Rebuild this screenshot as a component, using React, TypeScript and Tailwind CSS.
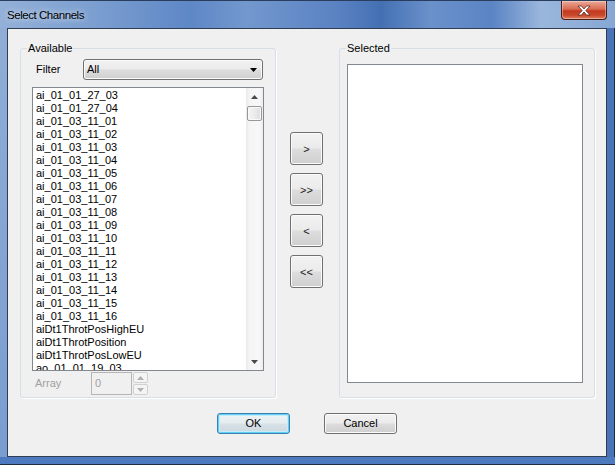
import React from 'react';

const channels = [
  'ai_01_01_27_03',
  'ai_01_01_27_04',
  ...Array.from({ length: 16 }, (_, i) => `ai_01_03_11_${String(i + 1).padStart(2, '0')}`),
  'aiDt1ThrotPosHighEU',
  'aiDt1ThrotPosition',
  'aiDt1ThrotPosLowEU',
  'ao_01_01_19_03',
];

const btnFace =
  'border border-[#707070] rounded-[3px] bg-[linear-gradient(180deg,#f2f2f2_0%,#ebebeb_48%,#dddddd_52%,#cfcfcf_100%)] shadow-[inset_0_0_0_1px_#fbfbfb]';

function GroupBox({ label, children }: { label: string; children: React.ReactNode }) {
  return (
    <div className="relative mt-[19px] h-[350px] w-[256px] rounded-[3px] border border-[#d5dfe5] shadow-[1px_1px_0_#ffffff]">
      <span className="absolute -top-[7px] left-[6px] bg-[#f0f0f0] px-[1px] text-[11px] leading-[13px] text-black">
        {label}
      </span>
      {children}
    </div>
  );
}

function Arrow({ dir, color }: { dir: 'up' | 'down'; color: string }) {
  return (
    <svg width="7" height="4" viewBox="0 0 7 4">
      <path d={dir === 'up' ? 'M0 4H7L3.5 0Z' : 'M0 0H7L3.5 4Z'} fill={color} />
    </svg>
  );
}

function ScrollBar() {
  return (
    <div className="flex h-full w-[17px] flex-col bg-[linear-gradient(90deg,#e9e9e9_0%,#f5f5f5_20%,#f7f7f7_80%,#ececec_100%)]">
      <div className="flex h-[17px] items-center justify-center">
        <Arrow dir="up" color="#4a4a4a" />
      </div>
      <div className="mx-[1px] mt-[1px] h-[15px] rounded-[2px] border border-[#979797] bg-[linear-gradient(90deg,#f4f4f4_0%,#ececec_50%,#dcdcdc_100%)] shadow-[inset_0_0_0_1px_#fafafa]" />
      <div className="flex-1" />
      <div className="flex h-[17px] items-center justify-center">
        <Arrow dir="down" color="#4a4a4a" />
      </div>
    </div>
  );
}

function MoveButton({ text }: { text: string }) {
  return (
    <button className={`flex h-[33px] w-[33px] items-center justify-center pt-[1px] text-[11px] leading-none text-[#222] ${btnFace}`}>
      {text}
    </button>
  );
}

export default function App() {
  return (
    <div className="flex h-[465px] w-[615px] flex-col overflow-hidden bg-[#4d7abf] font-['Liberation_Sans',Arial,sans-serif]">
      {/* title bar */}
      <div className="flex h-[28px] shrink-0 items-start justify-between border-t border-[#2a3d5c] bg-[linear-gradient(90deg,#93b0d8_0%,#7c9fd0_15%,#5e87c6_31%,#7398ce_40%,#5a82c2_55%,#4470b3_62%,#6b91ca_70%,#5a84c4_80%,#9ab6dc_88%,#86a7d5_100%)] pr-[8px]">
        <span className="pl-[7px] pt-[8px] text-[11.5px] leading-[13px] tracking-[-0.45px] text-black [text-shadow:0_0_6px_rgba(255,255,255,0.9)]">
          Select Channels
        </span>
        <button className="flex h-[19px] w-[46px] items-center justify-center rounded-b-[4px] border border-t-0 border-[#4a1f17] bg-[linear-gradient(180deg,#eaa998_0%,#d96b52_45%,#c3391f_55%,#c94a2c_80%,#e08263_100%)] shadow-[inset_0_0_0_1px_rgba(255,255,255,0.35)]">
          <svg width="14" height="11" viewBox="0 0 14 11">
            <path
              d="M1 1H4.5L7 4L9.5 1H13L8.8 5.5L13 10H9.5L7 7L4.5 10H1L5.2 5.5Z"
              fill="#ffffff"
              stroke="#5a2a22"
              strokeWidth="0.8"
              strokeLinejoin="round"
            />
          </svg>
        </button>
      </div>

      <div className="flex flex-1">
        <div className="w-[7px] bg-[linear-gradient(180deg,#8fadd6_0%,#7a9dd0_100%)]" />

        {/* client area */}
        <div className="flex h-[429px] w-[600px] flex-col border border-[#2f3e52] bg-[#f0f0f0]">
          <div className="flex pl-[12px]">
            {/* Available */}
            <GroupBox label="Available">
              <div className="mt-[10px] flex items-center">
                <span className="ml-[15px] w-[47px] text-[11px] text-black">Filter</span>
                <div className={`flex h-[21px] w-[180px] items-center justify-between pl-[3px] pr-[5px] text-[11px] text-black ${btnFace}`}>
                  <span>All</span>
                  <Arrow dir="down" color="#000000" />
                </div>
              </div>
              <div className="ml-[11px] mt-[7px] flex h-[284px] w-[232px] border border-[#828790] bg-white">
                <div className="flex-1 overflow-hidden pl-[3px] pt-[1px]">
                  {channels.map((c) => (
                    <div key={c} className="h-[13px] text-[11px] leading-[13px] text-black">
                      {c}
                    </div>
                  ))}
                </div>
                <ScrollBar />
              </div>
              <div className="mt-[1px] flex items-center">
                <span className="ml-[14px] w-[56px] text-[11px] text-[#a0a0a0]">Array</span>
                <div className="flex h-[23px] w-[41px] items-center border border-[#b5b5b5] bg-[#f0f0f0] pl-[3px] text-[11px] text-[#a0a0a0]">
                  0
                </div>
                <div className="ml-[1px] flex flex-col gap-[1px]">
                  <div className="flex h-[11px] w-[15px] items-center justify-center rounded-[2px] border border-[#d0d0d0] bg-[#f4f4f4]">
                    <Arrow dir="up" color="#b0b0b0" />
                  </div>
                  <div className="flex h-[11px] w-[15px] items-center justify-center rounded-[2px] border border-[#d0d0d0] bg-[#f4f4f4]">
                    <Arrow dir="down" color="#b0b0b0" />
                  </div>
                </div>
              </div>
            </GroupBox>

            {/* move buttons */}
            <div className="flex w-[63px] flex-col gap-[8px] pl-[14px] pt-[103px]">
              <MoveButton text=">" />
              <MoveButton text=">>" />
              <MoveButton text="<" />
              <MoveButton text="<<" />
            </div>

            {/* Selected */}
            <GroupBox label="Selected">
              <div className="ml-[7px] mt-[15px] h-[319px] w-[236px] border border-[#828790] bg-white" />
            </GroupBox>
          </div>

          <div className="mt-[15px] flex justify-center gap-[34px]">
            <button className="flex h-[21px] w-[73px] items-center justify-center rounded-[3px] border border-[#3c7fb1] bg-[linear-gradient(180deg,#eef4f7_0%,#e4ecf0_48%,#d7e1e7_52%,#cdd8df_100%)] text-[11px] text-black shadow-[inset_0_0_0_1px_#5fd0f4,inset_0_0_0_2px_#c4ecfa]">
              OK
            </button>
            <button className={`flex h-[21px] w-[73px] items-center justify-center text-[11px] text-black ${btnFace}`}>
              Cancel
            </button>
          </div>
        </div>

        <div className="w-[8px] border-r border-[#1e2d44] bg-[#4b74b8]" />
      </div>
      <div className="h-[8px] shrink-0 border-b border-[#1e2d44] bg-[#4d7abf]" />
    </div>
  );
}
